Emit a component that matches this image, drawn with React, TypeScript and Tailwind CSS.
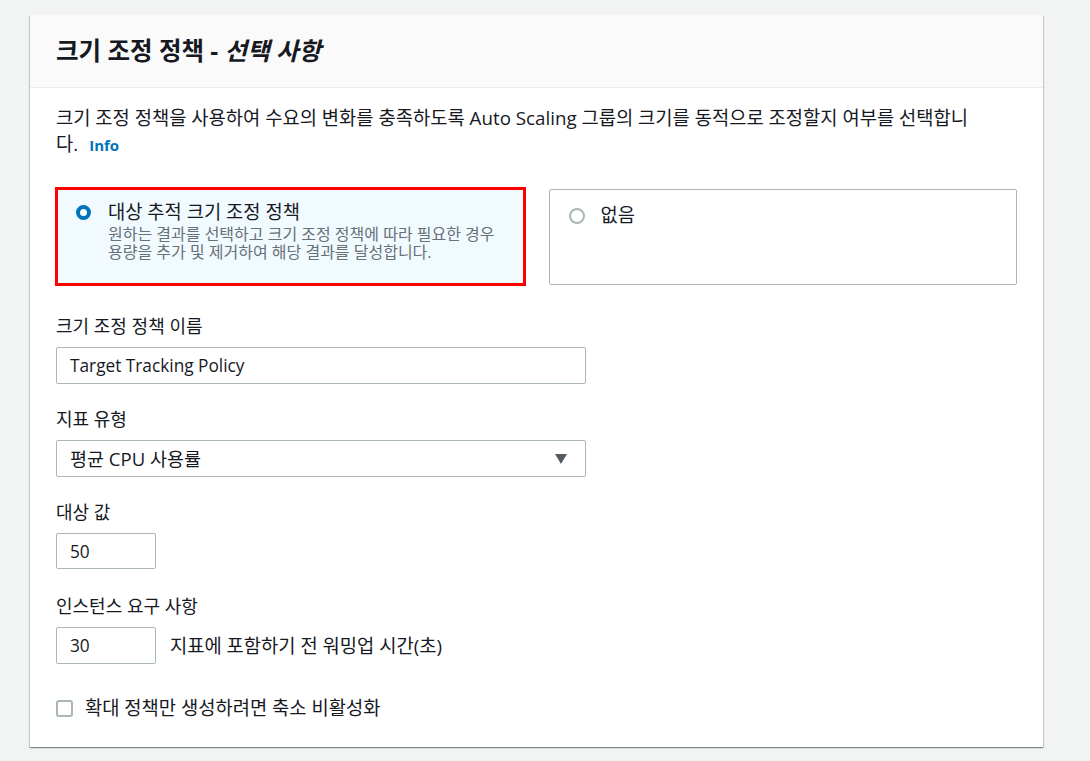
import React, { useState } from "react";

const font = "font-['Open_Sans','Noto_Sans_CJK_KR',sans-serif]";

type TileProps = {
  selected: boolean;
  title: string;
  desc?: string;
  onClick: () => void;
};

const Radio: React.FC<{ on: boolean }> = ({ on }) =>
  on ? (
    <span className="mt-[6px] w-[15px] h-[15px] shrink-0 rounded-full border-[4.5px] border-[#0073bb] bg-white" />
  ) : (
    <span className="mt-[6px] w-[16px] h-[16px] shrink-0 rounded-full border-2 border-[#aab7b8] bg-white" />
  );

const Tile: React.FC<TileProps> = ({ selected, title, desc, onClick }) => (
  <button
    type="button"
    onClick={onClick}
    className={
      selected
        ? "-mx-px h-[99px] flex items-start gap-[17px] pl-[18px] pt-[9px] text-left bg-[#f1faff] border-[3px] border-[#ff0000]"
        : "h-[96px] self-center flex items-start gap-[16px] pl-[19px] pt-[12px] text-left bg-white border border-[#aab7b8] rounded-[2px]"
    }
  >
    <Radio on={selected} />
    <div>
      <div className="text-[18.75px] leading-[26px] text-[#16191f]">{title}</div>
      {desc && (
        <div className="max-w-[396px] text-[16px] leading-[18px] text-[#687078]">{desc}</div>
      )}
    </div>
  </button>
);

const Label: React.FC<{ children: React.ReactNode }> = ({ children }) => (
  <div className="text-[18px] leading-[26px] text-[#16191f] mb-[8px]">{children}</div>
);

export default function App() {
  const [policy, setPolicy] = useState<"target" | "none">("target");
  const [name, setName] = useState("Target Tracking Policy");
  const [target, setTarget] = useState("50");
  const [warmup, setWarmup] = useState("30");
  const [scaleInOff, setScaleInOff] = useState(false);

  return (
    <div className={`min-h-screen bg-[#f2f3f3] pt-[15px] pb-[14px] ${font}`}>
      <div className="ml-[30px] w-[1013px] bg-white shadow-[0_1px_1px_0_rgba(0,28,36,0.3),1px_1px_1px_0_rgba(0,28,36,0.15),-1px_1px_1px_0_rgba(0,28,36,0.15)]">
        {/* header */}
        <div className="h-[73px] flex items-center px-[26px] bg-[#fafafa] border-b border-[#eaeded]">
          <h2 className="text-[24.5px] font-bold text-[#16191f]">
            크기 조정 정책 - <i>선택 사항</i>
          </h2>
        </div>

        {/* body */}
        <div className="px-[26px] pt-[17px] pb-[26px]">
          <p className="max-w-[916px] text-[18.75px] leading-[26px] text-[#16191f]">
            크기 조정 정책을 사용하여 수요의 변화를 충족하도록 Auto Scaling 그룹의 크기를 동적으로 조정할지 여부를 선택합니다.
            <a href="#" className="inline-block ml-[11px] text-[15px] leading-[20px] font-bold text-[#0073bb]">
              Info
            </a>
          </p>

          <div className="mt-[30px] grid grid-cols-2 gap-[24px]">
            <Tile
              selected={policy === "target"}
              title="대상 추적 크기 조정 정책"
              desc="원하는 결과를 선택하고 크기 조정 정책에 따라 필요한 경우 용량을 추가 및 제거하여 해당 결과를 달성합니다."
              onClick={() => setPolicy("target")}
            />
            <Tile selected={policy === "none"} title="없음" onClick={() => setPolicy("none")} />
          </div>

          <div className="mt-[27px] flex flex-col gap-[22px]">
            <div>
              <Label>크기 조정 정책 이름</Label>
              <input
                value={name}
                onChange={(e) => setName(e.target.value)}
                className="w-[530px] h-[37px] px-[13px] border border-[#aab7b8] rounded-[2px] text-[17.25px] text-[#16191f] outline-none"
              />
            </div>

            <div>
              <Label>지표 유형</Label>
              <div className="relative w-[530px] h-[37px] flex items-center px-[13px] border border-[#aab7b8] rounded-[2px] text-[18.5px] text-[#16191f]">
                평균 CPU 사용률
                <svg
                  className="absolute right-[18px] top-[13px]"
                  width="12"
                  height="10"
                  viewBox="0 0 12 10"
                >
                  <path d="M0 0 H12 L6 10 Z" fill="#545b64" />
                </svg>
              </div>
            </div>

            <div>
              <Label>대상 값</Label>
              <input
                value={target}
                onChange={(e) => setTarget(e.target.value)}
                className="w-[100px] h-[36px] px-[13px] border border-[#aab7b8] rounded-[2px] text-[17.25px] text-[#16191f] outline-none"
              />
            </div>

            <div className="mt-[2px]">
              <Label>인스턴스 요구 사항</Label>
              <div className="flex items-center gap-[14px]">
                <input
                  value={warmup}
                  onChange={(e) => setWarmup(e.target.value)}
                  className="w-[100px] h-[37px] px-[13px] border border-[#aab7b8] rounded-[2px] text-[17.25px] text-[#16191f] outline-none"
                />
                <span className="text-[18.75px] leading-[26px] text-[#16191f]">
                  지표에 포함하기 전 워밍업 시간(초)
                </span>
              </div>
            </div>
          </div>

          <label className="mt-[31px] flex items-center gap-[12px] cursor-pointer">
            <span
              onClick={() => setScaleInOff((v) => !v)}
              className={
                scaleInOff
                  ? "w-[17px] h-[17px] rounded-[3px] bg-[#0073bb] border-2 border-[#0073bb]"
                  : "w-[17px] h-[17px] rounded-[3px] bg-white border-2 border-[#aab7b8]"
              }
            />
            <span className="text-[18.75px] leading-[26px] text-[#16191f]">
              확대 정책만 생성하려면 축소 비활성화
            </span>
          </label>
        </div>
      </div>
    </div>
  );
}
